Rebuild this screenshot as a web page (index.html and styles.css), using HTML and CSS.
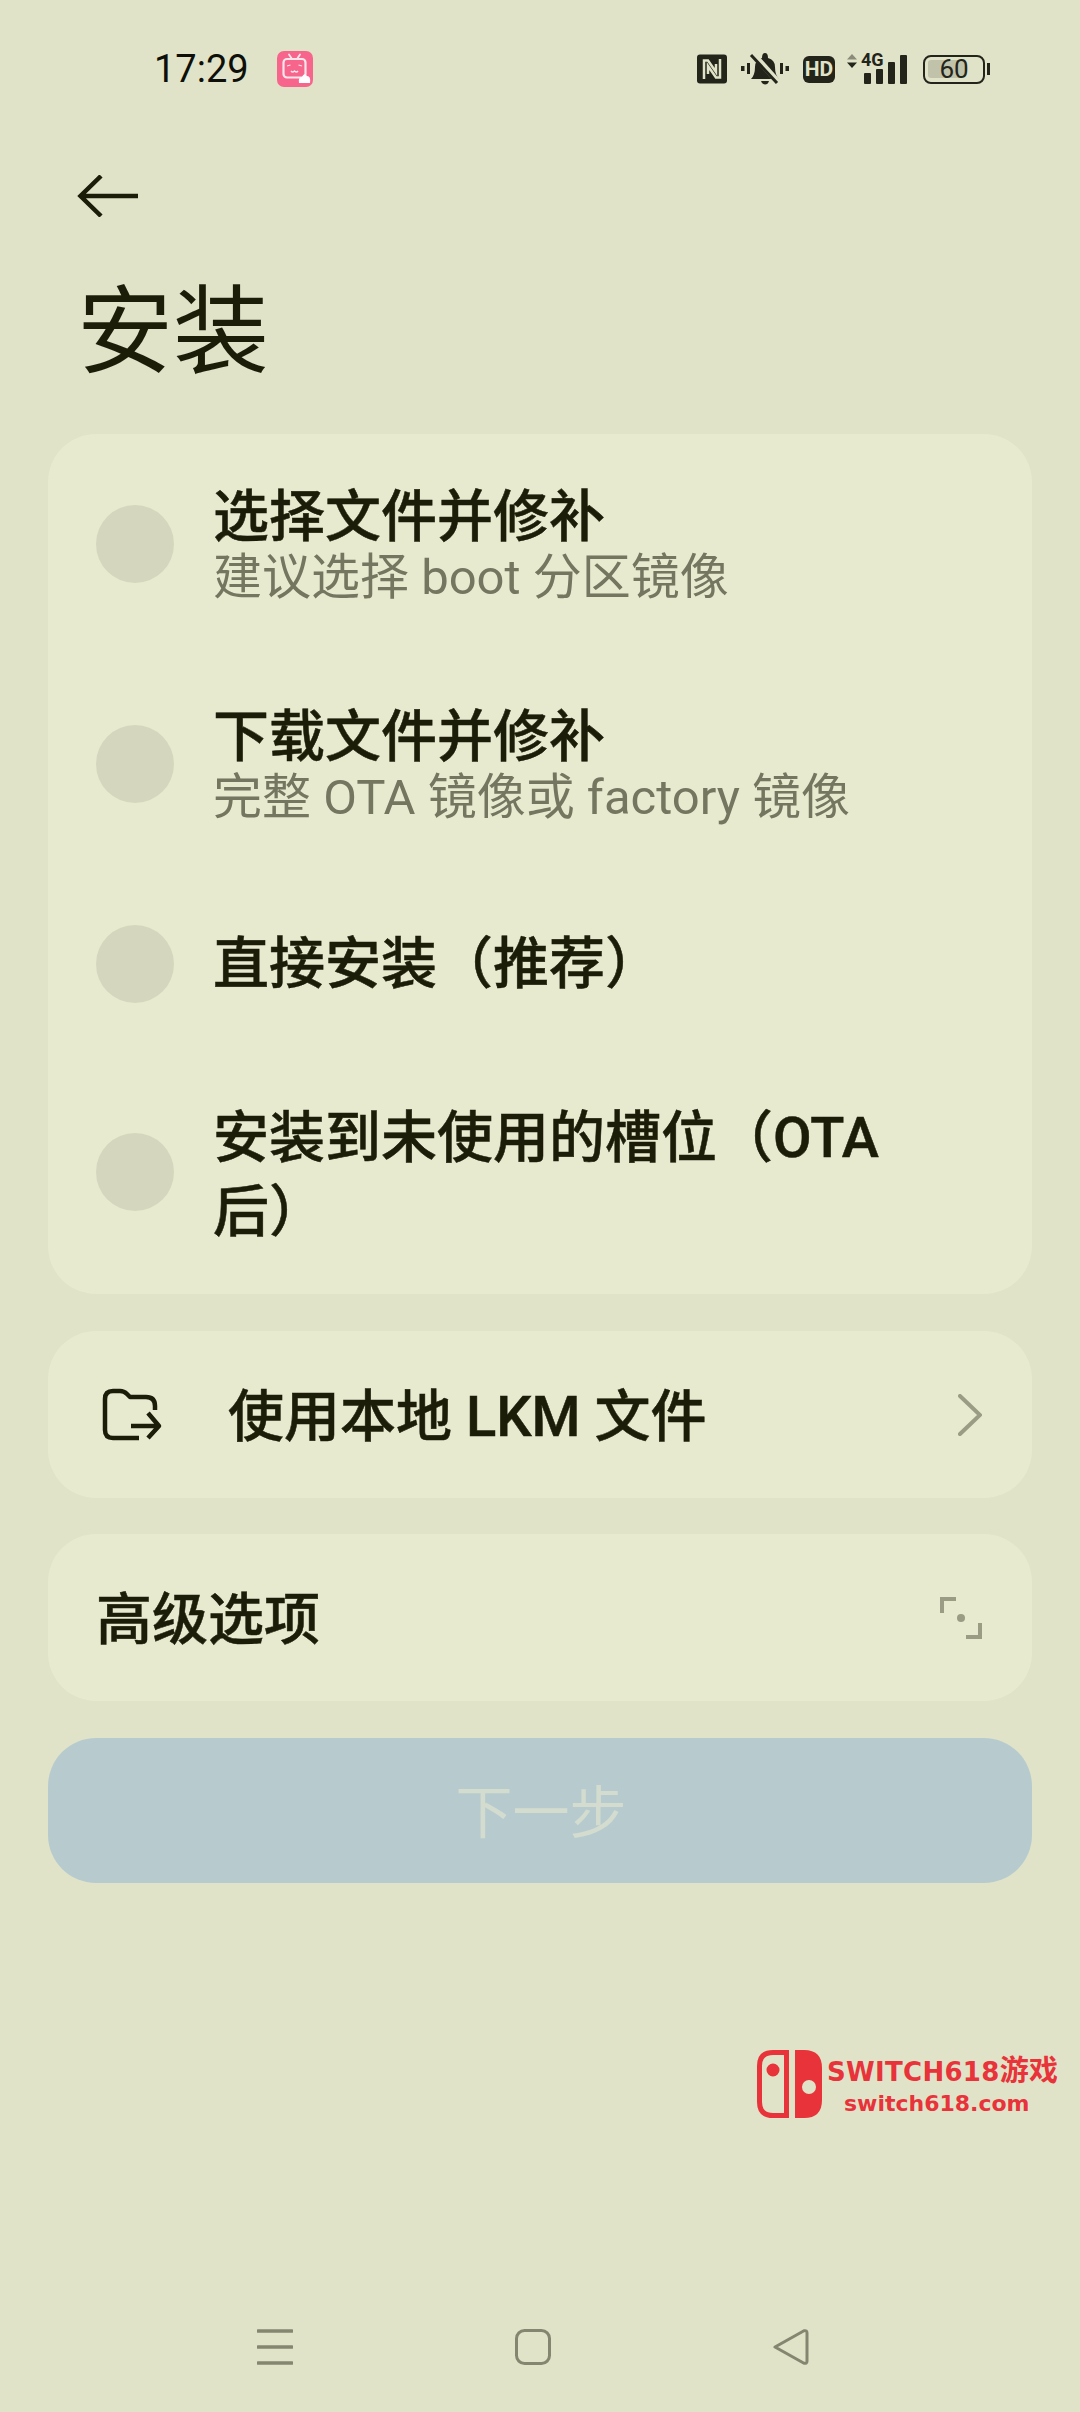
FILE: index.html
```html
<!DOCTYPE html>
<html lang="zh-CN">
    <head>
        <meta charset="UTF-8">
        <meta name="viewport" content="width=device-width, initial-scale=1.0">
        <title>安装</title>
        <link rel="stylesheet" href="styles.css">
    </head>
    <body>
        <div class="status-bar">
            <span class="time">17:29</span>
            <svg class="app-icon" width="36" height="36" viewBox="0 0 36 36">
                <rect width="36" height="36" rx="7" fill="#f7648c"/>
                <path d="M12 3.500L15 8M23 3.500L20 8" stroke="#fbe6ea" stroke-width="1.800" stroke-linecap="round"/>
                <rect x="6.500" y="8" width="22" height="18.500" rx="3.500" fill="none" stroke="#fbe6ea" stroke-width="2.200"/>
                <path d="M10 15L13.500 14M21.500 14L25 15M14 20Q15.500 22 17.500 20Q19.500 22 21 20" fill="none" stroke="#fbe6ea" stroke-width="1.300"/>
                <path d="M22 32Q21 26 25 26Q27 21 30 25Q34 25 33 32Z" fill="#fff"/>
            </svg>
            <div class="status-icons">
                <svg width="30" height="30" viewBox="0 0 30 30">
                    <rect width="30" height="29" y="0.500" rx="3" fill="#23241a"/>
                    <path d="M7 25V6.500H11L19 18V10M23 5V23.500H19L11 12V20" fill="none" stroke="#e0e3c8" stroke-width="2.500"/>
                </svg>
                <svg width="48" height="34" viewBox="0 0 48 34">
                    <path d="M0 14H3.500V19H0ZM6 11H9V22H6ZM39 11H42V22H39ZM44.500 14H48V19H44.500Z" fill="#23241a"/>
                    <path d="M10 27Q14 23 14 15Q14 8 21 6Q21 1 24 1Q27 1 27 6Q34 8 34 15Q34 23 38 27Z" fill="#23241a"/>
                    <path d="M20 29H28Q27 32.500 24 32.500Q21 32.500 20 29Z" fill="#23241a"/>
                    <path d="M12 2L38 31" stroke="#e0e3c8" stroke-width="6"/>
                    <path d="M10 3L36 31" stroke="#23241a" stroke-width="3"/>
                </svg>
                <span class="hd">HD</span>
                <div class="signal">
                    <svg class="arrows" width="10" height="14" viewBox="0 0 10 14">
                        <path d="M5 0L10 5.500H0Z" fill="#8a8b78"/>
                        <path d="M5 14L10 8.500H0Z" fill="#23241a"/>
                    </svg>
                    <span class="net">4G</span>
                    <div class="bars">
                        <i class="bar bar-1"></i>
                        <i class="bar bar-2"></i>
                        <i class="bar bar-3"></i>
                        <i class="bar bar-4"></i>
                    </div>
                </div>
                <div class="battery">
                    <div class="battery-body">
                        <div class="battery-fill"></div>
                        <span class="battery-text">60</span>
                    </div>
                    <i class="battery-cap"></i>
                </div>
            </div>
        </div>

        <div class="header">
            <svg width="62" height="42" viewBox="0 0 62 42">
                <path d="M61 21H4M24 1L3.500 21L24 41" fill="none" stroke="#1c1d08" stroke-width="4.500"/>
            </svg>
        </div>
        <h1 class="title">安装</h1>

        <div class="card methods">
            <div class="row row-two">
                <span class="radio"></span>
                <div class="row-text">
                    <div class="row-title">选择文件并修补</div>
                    <div class="row-sub">建议选择 boot 分区镜像</div>
                </div>
            </div>
            <div class="row row-two">
                <span class="radio"></span>
                <div class="row-text">
                    <div class="row-title">下载文件并修补</div>
                    <div class="row-sub">完整 OTA 镜像或 factory 镜像</div>
                </div>
            </div>
            <div class="row row-one">
                <span class="radio"></span>
                <div class="row-text">
                    <div class="row-title wide">直接安装（推荐）</div>
                </div>
            </div>
            <div class="row row-wrap">
                <span class="radio"></span>
                <div class="row-text">
                    <div class="row-title wide">安装到未使用的槽位（OTA后）</div>
                </div>
            </div>
        </div>

        <div class="card link-card local">
            <svg class="folder" width="60" height="54" viewBox="0 0 60 54">
                <path d="M37 50H11Q3 50 3 42V11Q3 3 11 3H18Q22 3 25 6L28 9H44Q53 9 53 18V22M29 38H57M46 25L57 38L46 50" fill="none" stroke="#1c1d08" stroke-width="4.500" stroke-linejoin="round"/>
            </svg>
            <span class="link-label">使用本地 LKM 文件</span>
            <svg width="24" height="42" viewBox="0 0 24 42">
                <path d="M2 2L22 21L2 40" fill="none" stroke="#9a9c84" stroke-width="4" stroke-linecap="round"/>
            </svg>
        </div>

        <div class="card link-card advanced">
            <span class="link-label">高级选项</span>
            <svg width="42" height="42" viewBox="0 0 42 42">
                <path d="M2 16V2H16M40 26V40H26" fill="none" stroke="#9a9c84" stroke-width="4"/>
                <circle cx="21" cy="21" r="4" fill="#9a9c84"/>
            </svg>
        </div>

        <button class="next-btn">下一步</button>

        <div class="watermark">
            <svg width="66" height="68" viewBox="0 0 66 68">
                <path fill-rule="evenodd" fill="#e8333a" d="M16 0H32V68H16Q0 68 0 52V16Q0 0 16 0ZM16 5Q5 5 5 16V52Q5 63 16 63H27V5ZM16 13.500A6.500 6.500 0 1 1 16 26.500A6.500 6.500 0 1 1 16 13.500Z"/>
                <path fill-rule="evenodd" fill="#e8333a" d="M38 0H47Q65 0 65 18V50Q65 68 47 68H38ZM52 30A7 7 0 1 0 52 44A7 7 0 1 0 52 30Z"/>
            </svg>
            <div class="watermark-text">
                <div class="wm-name">SWITCH618<span class="wm-cjk">游戏</span></div>
                <div class="wm-url">switch618.com</div>
            </div>
        </div>

        <div class="nav-bar">
            <svg width="36" height="36" viewBox="0 0 36 36">
                <path d="M1 2H35M1 18H35M1 34H35" stroke="#85866f" stroke-width="3.500" stroke-linecap="round"/>
            </svg>
            <svg width="36" height="36" viewBox="0 0 36 36">
                <rect x="1.500" y="1.500" width="33" height="33" rx="8" fill="none" stroke="#85866f" stroke-width="3"/>
            </svg>
            <svg width="36" height="36" viewBox="0 0 36 36">
                <path d="M2 18L31 1.800Q34 1 34 4V32Q34 35 31 34.200Z" fill="none" stroke="#85866f" stroke-width="3" stroke-linejoin="round"/>
            </svg>
        </div>
    </body>
</html>
```

FILE: styles.css
```css
body {
    position: relative;
    display: flex;
    flex-direction: column;
    width: 1080px;
    height: 2412px;
    margin: 0;
    overflow: hidden;
    background-color: #e0e3c8;
    color: #1c1d08;
    font-family: Roboto, "Noto Sans CJK SC", sans-serif;
}
.status-bar {
    display: flex;
    align-items: center;
    height: 36px;
    padding: 51px 0 0 154px;
}
.time {
    width: 123px;
    font-size: 38px;
    color: #0e0f08;
}
.status-icons {
    display: flex;
    align-items: center;
    gap: 14px;
    margin-left: auto;
    margin-right: 90px;
}
.hd {
    width: 32px;
    height: 27px;
    border-radius: 6px;
    background-color: #23241a;
    color: #e0e3c8;
    font-size: 21px;
    font-weight: 700;
    line-height: 27px;
    text-align: center;
}
.signal {
    position: relative;
    display: flex;
    align-items: flex-end;
    width: 60px;
    height: 30px;
    margin-left: -2px;
}
.arrows {
    position: absolute;
    top: 0;
    left: 0;
}
.net {
    position: absolute;
    top: -5px;
    left: 14px;
    font-size: 18px;
    font-weight: 700;
    color: #23241a;
}
.bars {
    display: flex;
    align-items: flex-end;
    gap: 5px;
    margin-left: 17px;
}
.bar {
    width: 7px;
    border-radius: 1px;
    background-color: #23241a;
}
.bar-1 { height: 11px; }
.bar-2 { height: 15px; }
.bar-3 { height: 22px; }
.bar-4 { height: 29px; }
.battery {
    display: flex;
    align-items: center;
    gap: 2px;
    margin-left: 2px;
}
.battery-body {
    position: relative;
    box-sizing: border-box;
    width: 62px;
    height: 29px;
    border: 2.500px solid #23241a;
    border-radius: 8px;
}
.battery-fill {
    width: 37px;
    height: 18px;
    margin: 3px;
    border-radius: 3px;
    background-color: #c0c3a9;
}
.battery-text {
    position: absolute;
    top: 0;
    left: 0;
    width: 100%;
    font-size: 26px;
    line-height: 24px;
    text-align: center;
    color: #23241a;
}
.battery-cap {
    width: 3px;
    height: 12px;
    background-color: #23241a;
}
.header {
    display: flex;
    height: 42px;
    padding: 88px 0 0 77px;
}
.title {
    margin: 59px 0 46px 77px;
    font-size: 96px;
    font-weight: 400;
    line-height: 112px;
}
.card {
    margin: 0 48px 37px;
    border-radius: 48px;
    background-color: #e7eacf;
}
.methods {
    padding-right: 132px;
}
.local {
    margin-bottom: 36px;
}
.row {
    display: flex;
    align-items: center;
    gap: 39px;
    padding-left: 48px;
}
.row-two { height: 220px; }
.row-two .row-text { padding-top: 6px; }
.row-two .row-title { margin-bottom: -3px; }
.row-one { height: 179px; }
.row-wrap { height: 241px; }
.row-wrap .radio { margin-top: -3px; }
.row-wrap .row-text { padding-top: 3px; }
.radio {
    flex: none;
    width: 78px;
    height: 78px;
    border-radius: 50%;
    background-color: #d4d7bd;
}
.row-title {
    font-size: 56px;
    font-weight: 500;
    line-height: 63px;
    -webkit-text-stroke: 0.5px #1c1d08;
}
.row-title.wide {
    line-height: 74px;
}
.row-sub {
    font-size: 49px;
    line-height: 63px;
    color: #74765f;
}
.link-card {
    display: flex;
    align-items: center;
    height: 167px;
    padding: 0 50px 0 54px;
}
.link-label {
    flex: 1;
    margin-left: 66px;
    padding-bottom: 6px;
    font-size: 56px;
    font-weight: 500;
    -webkit-text-stroke: 0.5px #1c1d08;
}
.advanced .link-label {
    margin-left: -6px;
}
.next-btn {
    height: 145px;
    margin: 0 48px;
    padding: 0 0 6px 2px;
    border: none;
    border-radius: 48px;
    background-color: #b7cbcf;
    color: #d3dccf;
    font-family: inherit;
    font-size: 57px;
}
.watermark {
    position: absolute;
    top: 2050px;
    left: 757px;
    display: flex;
    gap: 4px;
    color: #e8333a;
}
.wm-name {
    font-family: "DejaVu Sans", "Noto Sans CJK SC", sans-serif;
    font-size: 26px;
    font-weight: 700;
    letter-spacing: 0.300px;
    line-height: 36px;
    white-space: nowrap;
}
.wm-cjk {
    font-family: "Noto Sans CJK SC", sans-serif;
    font-size: 29px;
}
.wm-url {
    margin-left: 17px;
    font-family: "DejaVu Sans", sans-serif;
    font-size: 22px;
    font-weight: 700;
    line-height: 28px;
}
.nav-bar {
    display: flex;
    justify-content: space-between;
    margin-top: auto;
    padding: 0 271px 47px 257px;
}
```
